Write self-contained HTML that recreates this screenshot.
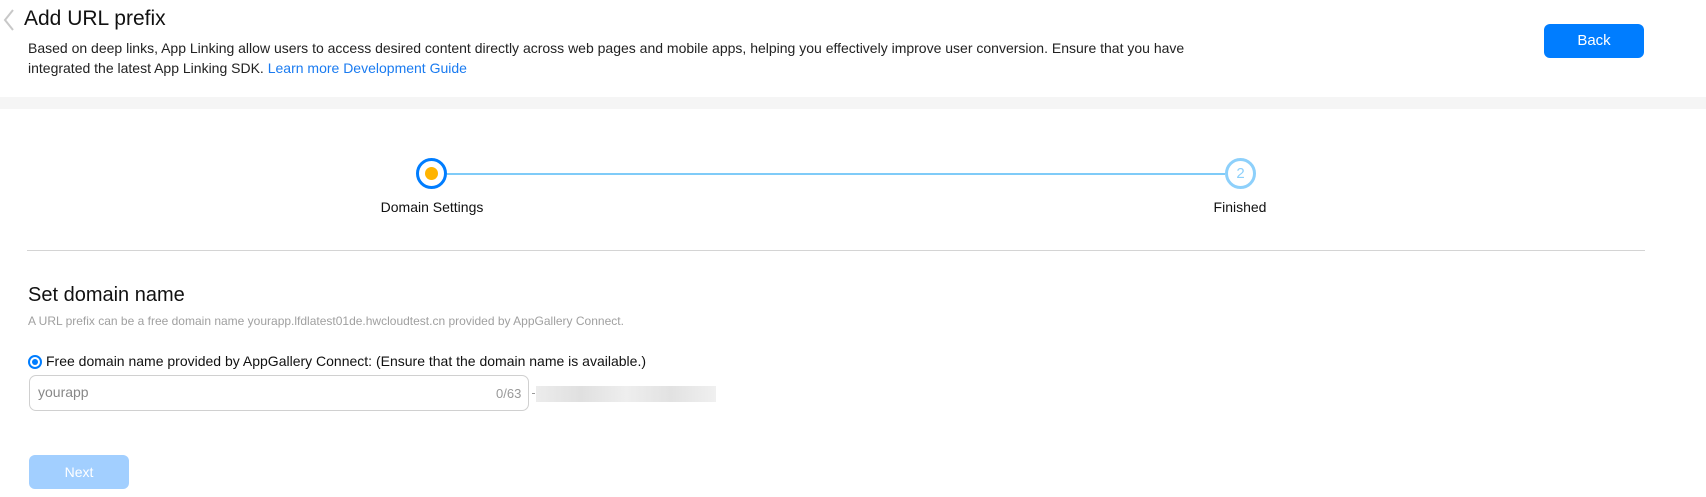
<!DOCTYPE html>
<html><head><meta charset="utf-8"><style>
*{margin:0;padding:0;box-sizing:border-box}
body{width:1706px;height:497px;background:#fff;font-family:"Liberation Sans",Arial,sans-serif;position:relative;overflow:hidden;color:#000}
.a{position:absolute;white-space:nowrap}
</style></head><body>
<svg class="a" style="left:3px;top:9px" width="12" height="22"><path d="M10 1 L2 11 L10 21" stroke="#c8c8c8" stroke-width="2" fill="none"/></svg>
<div class="a" style="left:24px;top:7px;font-size:21px;color:#111">Add URL prefix</div>
<div class="a" style="left:28px;top:38px;font-size:14px;line-height:20px;color:#222">Based on deep links, App Linking allow users to access desired content directly across web pages and mobile apps, helping you effectively improve user conversion. Ensure that you have<br>integrated the latest App Linking SDK. <span style="color:#1a7bf0">Learn more Development Guide</span></div>
<div class="a" style="left:1544px;top:24px;width:100px;height:34px;background:#007dff;border-radius:6px;color:#fff;font-size:15px;line-height:34px;text-align:center">Back</div>
<div class="a" style="left:0;top:97px;width:1706px;height:12px;background:#f5f5f5"></div>
<div class="a" style="left:447px;top:173px;width:778px;height:2px;background:#7fcbf8"></div>
<div class="a" style="left:416px;top:158px;width:31px;height:31px;border:3px solid #007dff;border-radius:50%;background:#fff"></div>
<div class="a" style="left:425px;top:167px;width:13px;height:13px;border-radius:50%;background:#ffb400"></div>
<div class="a" style="left:1225px;top:158px;width:31px;height:31px;border:3px solid #8dd0fb;border-radius:50%;background:#fff;color:#8dd0fb;font-size:15px;line-height:25px;text-align:center">2</div>
<div class="a" style="left:332px;top:199px;width:200px;text-align:center;font-size:14px;color:#111">Domain Settings</div>
<div class="a" style="left:1140px;top:199px;width:200px;text-align:center;font-size:14px;color:#111">Finished</div>
<div class="a" style="left:27px;top:250px;width:1618px;height:1px;background:#d4d4d4"></div>
<div class="a" style="left:28px;top:284px;font-size:20px;color:#111">Set domain name</div>
<div class="a" style="left:28px;top:314px;font-size:12px;color:#a0a0a0">A URL prefix can be a free domain name yourapp.lfdlatest01de.hwcloudtest.cn provided by AppGallery Connect.</div>
<div class="a" style="left:28px;top:355px;width:14px;height:14px;border:2px solid #007dff;border-radius:50%"></div>
<div class="a" style="left:32px;top:359px;width:6px;height:6px;background:#007dff;border-radius:50%"></div>
<div class="a" style="left:46px;top:353px;font-size:14px;color:#111">Free domain name provided by AppGallery Connect: (Ensure that the domain name is available.)</div>
<div class="a" style="left:29px;top:375px;width:500px;height:36px;border:1px solid #d0d0d0;border-radius:7px"></div>
<div class="a" style="left:38px;top:384px;font-size:14px;color:#888">yourapp</div>
<div class="a" style="left:496px;top:386px;font-size:13px;color:#999">0/63</div>
<div class="a" style="left:532px;top:393px;width:3px;height:1px;background:#999"></div>
<div class="a" style="left:536px;top:386px;width:180px;height:16px;background:linear-gradient(90deg,#ececec,#e0e0e0,#eeeeee,#e2e2e2,#f0f0f0)"></div>
<div class="a" style="left:29px;top:455px;width:100px;height:34px;background:#a2cfff;border-radius:6px;color:#fff;font-size:14px;line-height:34px;text-align:center">Next</div>
</body></html>
